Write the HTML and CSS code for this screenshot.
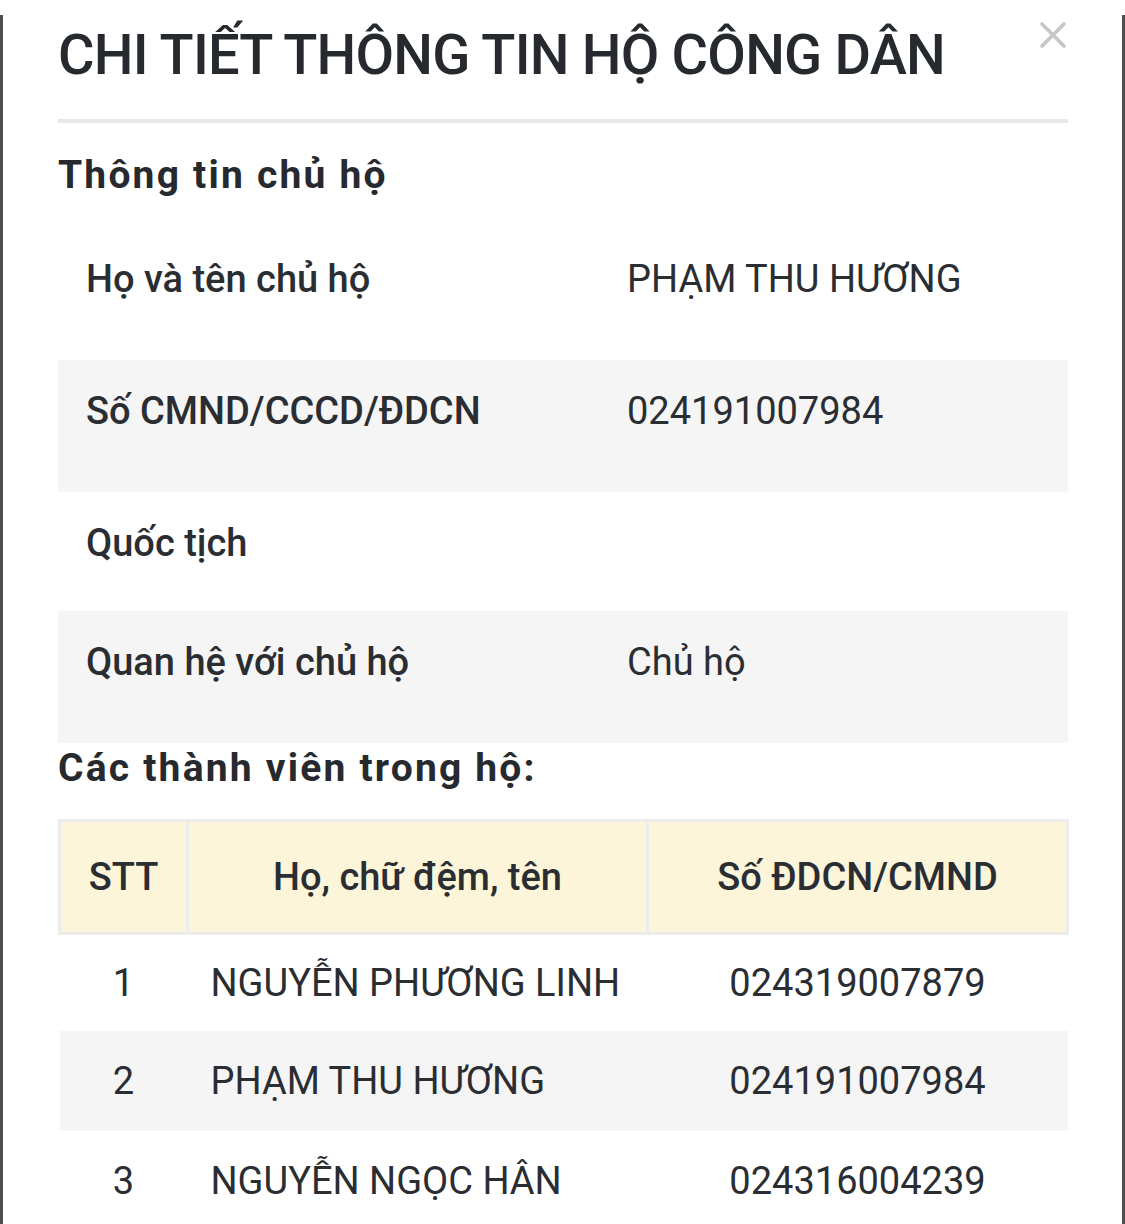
FILE: index.html
```html
<!DOCTYPE html>
<html lang="vi">
<head>
<meta charset="utf-8">
<title>Chi tiết thông tin hộ công dân</title>
<link rel="stylesheet" href="styles.css">
</head>
<body>
<div class="modal">
  <button class="close" aria-label="Đóng">
    <svg viewBox="0 0 28 28" width="28" height="28"><path d="M3 3 L25 25 M25 3 L3 25" stroke="#c6c6c6" stroke-width="3.6" stroke-linecap="round" fill="none"/></svg>
  </button>
  <header class="modal-header">
    <h1 class="title">CHI TIẾT THÔNG TIN HỘ CÔNG DÂN</h1>
  </header>

  <h2 class="section-title first">Thông tin chủ hộ</h2>
  <div class="info">
    <div class="info-row">
      <div class="label">Họ và tên chủ hộ</div>
      <div class="value">PHẠM THU HƯƠNG</div>
    </div>
    <div class="info-row alt">
      <div class="label">Số CMND/CCCD/ĐDCN</div>
      <div class="value">024191007984</div>
    </div>
    <div class="info-row">
      <div class="label">Quốc tịch</div>
      <div class="value"></div>
    </div>
    <div class="info-row alt">
      <div class="label">Quan hệ với chủ hộ</div>
      <div class="value">Chủ hộ</div>
    </div>
  </div>

  <h2 class="section-title second">Các thành viên trong hộ:</h2>
  <table class="members">
    <colgroup>
      <col class="c-stt">
      <col class="c-name">
      <col class="c-id">
    </colgroup>
    <thead>
      <tr><th>STT</th><th>Họ, chữ đệm, tên</th><th>Số ĐDCN/CMND</th></tr>
    </thead>
    <tbody>
      <tr class="first-row"><td class="stt">1</td><td class="name">NGUYỄN PHƯƠNG LINH</td><td class="id">024319007879</td></tr>
      <tr class="alt"><td class="stt">2</td><td class="name">PHẠM THU HƯƠNG</td><td class="id">024191007984</td></tr>
      <tr><td class="stt">3</td><td class="name">NGUYỄN NGỌC HÂN</td><td class="id">024316004239</td></tr>
    </tbody>
  </table>
</div>
</body>
</html>
```

FILE: styles.css
```css
* { box-sizing: border-box; }

html, body {
  margin: 0;
  padding: 0;
  background: #ffffff;
}

body {
  font-family: Roboto, "Noto Sans", "Liberation Sans", sans-serif;
  color: #2a2d32;
  overflow: hidden;
  height: 1224px;
}

.modal {
  position: relative;
  margin-top: 15px;
  min-height: 1209px;
  border-left: 3px solid #4e4e4e;
  border-right: 3px solid #4e4e4e;
  padding: 5px 54px 0 55px;
}

.close {
  position: absolute;
  top: 6px;
  right: 55px;
  width: 28px;
  height: 28px;
  padding: 0;
  border: 0;
  background: transparent;
}

.close svg { display: block; }

.modal-header {
  padding-bottom: 29px;
  border-bottom: 4px solid #e8e8e8;
}

.title {
  margin: 0;
  font-size: 56px;
  line-height: 70px;
  font-weight: 500;
  letter-spacing: -0.8px;
  color: #26292e;
  white-space: nowrap;
}

.section-title {
  margin: 0;
  font-size: 39px;
  line-height: 46px;
  font-weight: 700;
  letter-spacing: 2.2px;
  color: #26292e;
}

.section-title.first { margin-top: 29px; margin-bottom: 30px; }
.section-title.second { margin-top: 2px; margin-bottom: 28px; }

.info-row {
  display: grid;
  grid-template-columns: 541px 1fr;
  align-items: start;
  padding: 28px 0 45px 28px;
}

.info-row.alt { background: #f5f5f6; }

.label {
  font-size: 38px;
  line-height: 46px;
  font-weight: 500;
}

.value {
  font-size: 38px;
  line-height: 46px;
  font-weight: 400;
  margin-bottom: 13px;
}

.value:empty { margin-bottom: 0; height: 0; }

.members {
  width: 1008px;
  border-collapse: collapse;
  table-layout: fixed;
}

.c-stt { width: 128px; }
.c-name { width: 460px; }
.c-id { width: 420px; }

.members th {
  height: 113px;
  background: #fcf5da;
  border: 3px solid #ececea;
  font-size: 38px;
  font-weight: 500;
  text-align: center;
  vertical-align: middle;
  padding: 0;
}

.members td {
  height: 100px;
  font-size: 38px;
  font-weight: 400;
  vertical-align: middle;
  padding: 0;
}

.members tr.first-row td { height: 97px; }

.members tr.alt td { background: #f5f5f6; }

.members td.stt { text-align: center; }
.members td.name { text-align: left; padding-left: 23px; white-space: nowrap; }
.members td.id { text-align: center; }
```
